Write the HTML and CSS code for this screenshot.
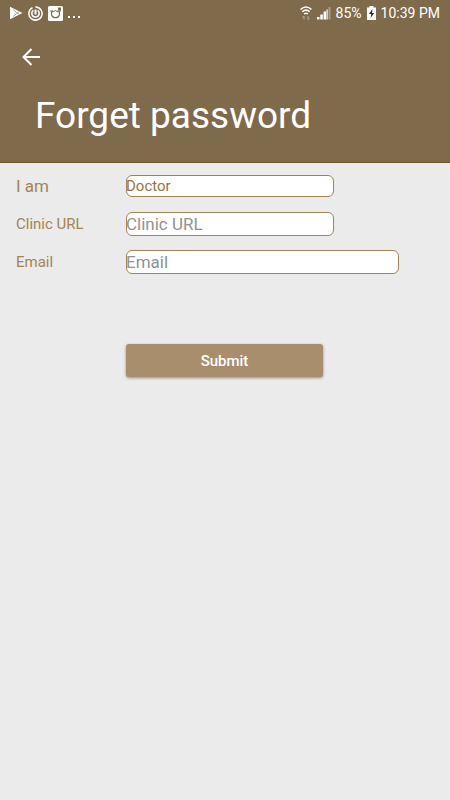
FILE: index.html
```html
<!DOCTYPE html>
<html lang="en">
<head>
<meta charset="utf-8">
<meta name="viewport" content="width=device-width, initial-scale=1">
<title>Forget password</title>
<link rel="stylesheet" href="styles.css">
</head>
<body>
<header class="header">
  <div class="status">
    <div class="status-group">
      <svg width="13" height="14" viewBox="0 0 13 14" aria-hidden="true">
        <path d="M0 .8 12.500 7 0 13.200Z" fill="#fff"/>
        <path d="M3 3.500 9.500 8.700M3 10.500l6.500-5.200" stroke="#a08e76" stroke-width=".8"/>
      </svg>
      <svg width="15" height="15" viewBox="0 0 15 15" fill="none" stroke="#fff" aria-hidden="true">
        <path d="M4.500 1.600A6.600 6.600 0 1 0 7.500.9q3.500 0 5.400 2.800" stroke-width="1.500"/>
        <path d="M5.300 4.400a3.700 3.700 0 1 0 4.400 0" stroke-width="1.600"/>
        <path d="M7.500 3.500v5" stroke-width="2"/>
      </svg>
      <svg width="15" height="15" viewBox="0 0 15 15" aria-hidden="true">
        <rect width="15" height="15" rx="1.500" fill="#fff"/>
        <path d="M2 5h2.500q-1.300 1.500-1 3.500a4.100 4.100 0 0 0 8 0q.3-2-1-3.500H13" fill="none" stroke="#806a4c" stroke-width="1.200"/>
        <path d="M5 6q2.500-3 5 0" fill="none" stroke="#806a4c"/>
        <rect x="10" y="1.500" width="3" height="3" fill="#806a4c"/>
      </svg>
      <svg width="13" height="14" viewBox="0 0 13 14" fill="#fff" aria-hidden="true">
        <path d="M0 10h2v2H0zM5 10h2v2H5zM10 10h2v2h-2z"/>
      </svg>
    </div>
    <div class="status-group">
      <svg width="12" height="14" viewBox="0 0 12 14" fill="none" stroke="#fff" aria-hidden="true">
        <path d="M.5 3.500q5.500-5 11 0M2.300 5.800q3.700-3.400 7.400 0M4.200 8q1.800-1.500 3.600 0" stroke-width="1.500"/>
        <path d="M4 13.500V10M2.500 11.500 4 10M8 10v3.500m1.500-1.500L8 13.500" stroke="#b9ad9b"/>
      </svg>
      <svg width="14" height="14" viewBox="0 0 14 14" fill="#fff" aria-hidden="true">
        <path d="M0 11h2.500v2.500H0zM3.300 8.500h2.500v5H3.300zM6.600 5.500h2.400v8H6.600z"/>
        <path d="M9.500 3.500h1.200v10H9.500z"/>
        <path d="M11.500 1h2v12.500h-2z" fill="#a99b85"/>
      </svg>
      <span>85%</span>
      <svg width="9" height="14" viewBox="0 0 9 14" aria-hidden="true">
        <path d="M2.500 0h4v1.500H9V14H0V1.500h2.500z" fill="#fff"/>
        <path d="M5.500 3 2 8h2.300L3.500 12 7.200 7H5z" fill="#2d251c"/>
      </svg>
      <span>10:39 PM</span>
    </div>
  </div>
  <button class="back" type="button" aria-label="Back">
    <svg width="18" height="18" viewBox="0 0 18 18" fill="none" stroke="#fff" stroke-width="2" aria-hidden="true">
      <path d="M18 9H1.500M9.500 1 1.500 9l8 8"/>
    </svg>
  </button>
  <h1 class="title">Forget password</h1>
</header>
<main>
  <form class="form">
    <label class="label label-large" for="role">I am</label>
    <select class="field field-select" id="role"><option>Doctor</option></select>
    <label class="label" for="clinic">Clinic URL</label>
    <input class="field" id="clinic" type="text" placeholder="Clinic URL">
    <label class="label" for="email">Email</label>
    <input class="field field-wide" id="email" type="email" placeholder="Email">
    <button class="submit" type="submit">Submit</button>
  </form>
</main>
</body>
</html>
```
FILE: styles.css
```css
* {
  box-sizing: border-box;
}

body {
  margin: 0;
  min-height: 100vh;
  background: #ebebeb;
  font-family: Roboto, "Liberation Sans", sans-serif;
}

svg {
  display: block;
  flex: none;
}

.header {
  padding-bottom: 21px;
  background: #806a4c;
  border-bottom: 1px solid #735527;
  color: #fff;
}

.status {
  display: flex;
  justify-content: space-between;
  align-items: center;
  height: 26px;
  padding: 0 10px;
  font-size: 14px;
}

.status-group {
  display: flex;
  align-items: center;
  gap: 5px;
}

.back {
  display: block;
  margin: 14px 0 0 14px;
  padding: 8px;
  border: 0;
  background: none;
}

.title {
  margin: 17px 35px 0;
  font-size: 37px;
  font-weight: 400;
  line-height: 50px;
}

.form {
  display: grid;
  grid-template-columns: 110px 1fr;
  row-gap: 14px;
  align-items: center;
  padding: 11px 16px;
}

.label {
  color: #a48355;
  font-size: 15px;
  line-height: 24px;
}

.label-large {
  font-size: 17px;
}

.field {
  width: 208px;
  max-width: 100%;
  height: 24px;
  padding: 0;
  border: 1px solid #a48353;
  border-radius: 6px;
  background: #fff;
  color: #98733d;
  font-family: inherit;
  font-size: 17px;
  text-indent: -1px;
}

.field::placeholder {
  color: #929292;
  opacity: 1;
}

.field-select {
  height: 22px;
  appearance: none;
  font-size: 15px;
}

.field-wide {
  width: 273px;
}

.submit {
  grid-column: 2;
  width: 197px;
  max-width: 100%;
  height: 33px;
  margin-top: 56px;
  padding: 0;
  border: 0;
  border-radius: 3px;
  background: #a88e6c;
  box-shadow: 0 1px 3px rgba(0, 0, 0, 0.4);
  color: #fff;
  font-family: inherit;
  font-size: 15px;
  font-weight: 500;
}
```
